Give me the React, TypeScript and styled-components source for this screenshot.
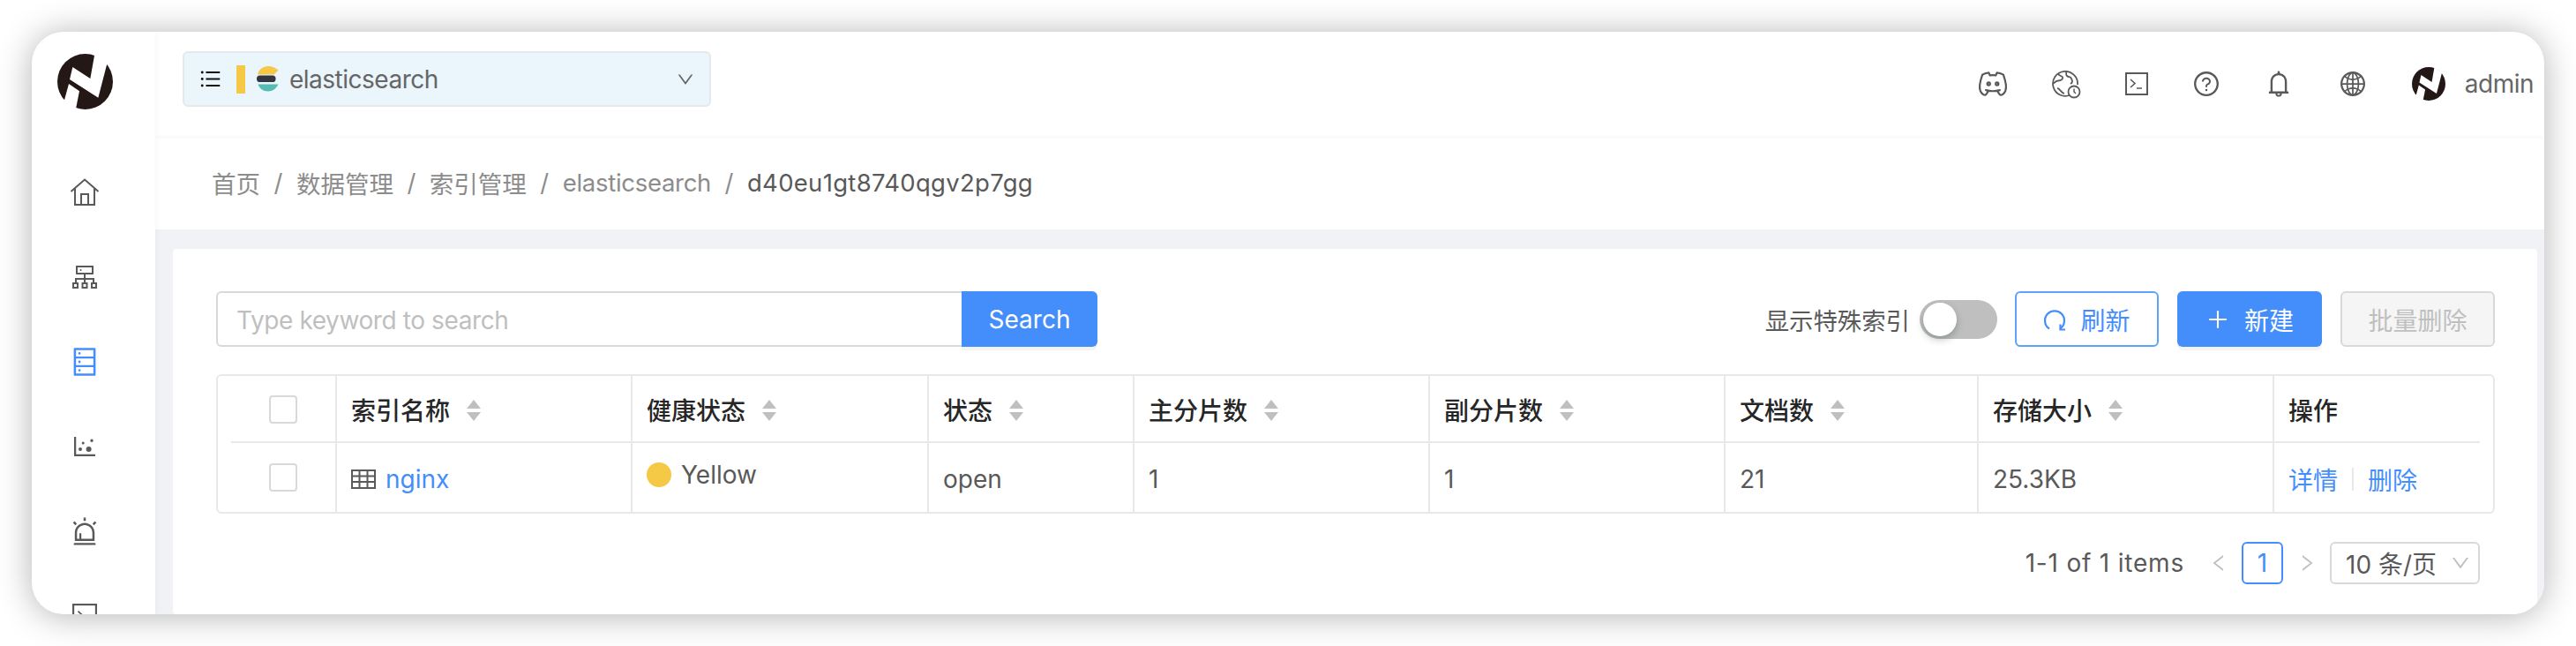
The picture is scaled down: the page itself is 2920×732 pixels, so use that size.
import styled, { createGlobalStyle } from "styled-components";
import {
  AiOutlineAlert,
  AiOutlineBell,
  AiOutlineDatabase,
  AiOutlineDotChart,
  AiOutlineDown,
  AiOutlineGlobal,
  AiOutlineLeft,
  AiOutlinePlus,
  AiOutlineQuestionCircle,
  AiOutlineRight,
  AiOutlineUnorderedList,
} from "react-icons/ai";
import { TbBrandDiscord } from "react-icons/tb";

const GlobalStyle = createGlobalStyle`
  html, body {
    margin: 0;
    background: #fff;
    overflow: hidden;
  }
  body {
    font-family: Inter, "Noto Sans CJK SC", sans-serif;
  }
  * {
    box-sizing: border-box;
  }
`;

const Logo = ({ size }: { size: number }) => (
  <svg width={size} height={size} viewBox="0 0 189 189">
    <circle cx="94.5" cy="94.5" r="94.5" fill="#231815" />
    <polygon points="127,0 170,30 139,149 42,87 52,45 112,84" fill="#fff" />
    <polygon points="39,102 75,127 62,192 22,164" fill="#fff" />
  </svg>
);

const ElasticLogo = () => (
  <svg width="26" height="29" viewBox="0 0 26 29">
    <path d="M1 9.5C2 4 7 0 13 0c4.5 0 8.5 2 11.500 4.500L19.500 9.500z" fill="#f5c945" />
    <rect x="0" y="10.500" width="21.500" height="7.500" rx="3.600" fill="#343741" />
    <path d="M1.500 20.500h23C22 25.500 18 28.500 13 28.500c-6 0-10-3.500-11.500-8z" fill="#54bcb2" />
  </svg>
);

const HomeIcon = () => (
  <svg width="34" height="32" viewBox="0 0 34 32" fill="none" stroke="#595959" strokeWidth="2">
    <path d="M1.500 15L17 1.500 32.500 15" />
    <path d="M6 11.500V30h22V11.500" />
    <path d="M13 30V18h8v12" />
  </svg>
);

const ClusterIcon = () => (
  <svg width="28" height="26" viewBox="0 0 28 26" fill="none" stroke="#595959" strokeWidth="2">
    <rect x="5" y="1" width="18" height="8" />
    <path d="M14 9v6M4 20v-5h20v5M14 15v5" />
    <rect x="1" y="20" width="5" height="5" />
    <rect x="11.500" y="20" width="5" height="5" />
    <rect x="22" y="20" width="5" height="5" />
    <circle cx="9.500" cy="5" r="1" fill="#595959" stroke="none" />
  </svg>
);

const TerminalIcon = ({ size }: { size: number }) => (
  <svg width={size} height={size} viewBox="0 0 26 26" fill="none" stroke="#595959" strokeWidth="2">
    <rect x="1" y="1" width="24" height="24" />
    <path d="M6 8l5 4.500-5 4.500M13 18h6" strokeWidth="1.600" />
  </svg>
);

const GlobeClockIcon = () => (
  <svg width="34" height="34" viewBox="0 0 34 34" fill="none" stroke="#595959" strokeWidth="1.800">
    <path d="M22 29.500A14 14 0 1 1 30 18" />
    <path d="M8 5.500c1 3 4 2 5 4s-2 4-5 4-4 2-5 3M17 2c1 3-1 4 1 6s4 0 5 3 2 4-1 6M7 22c3 0 4 5 8 6" />
    <circle cx="26" cy="26" r="6.500" fill="#fff" />
    <path d="M26 22.500V26l2 2" strokeWidth="1.500" />
  </svg>
);

const RefreshIcon = () => (
  <svg width="26" height="28" viewBox="0 0 26 28" fill="none" stroke="#448efc" strokeWidth="2.200">
    <path d="M7 24.500A11 11 0 1 1 19 24.500" />
    <path d="M19.500 19.500v6h5.500" />
  </svg>
);

const TableIcon = () => (
  <svg width="28" height="22" viewBox="0 0 28 22" fill="none" stroke="#595959" strokeWidth="2">
    <rect x="1" y="1" width="26" height="20" />
    <path d="M1 7.500h26M1 14h26M9.500 1v20M18.500 1v20" />
  </svg>
);

const Sorter = () => (
  <SortBox>
    <svg width="16" height="24" viewBox="0 0 16 24" fill="#bfbfbf">
      <path d="M8 0l8 10H0zM8 24L0 14h16z" />
    </svg>
  </SortBox>
);

const navIcons = [
  <HomeIcon key="home" />,
  <ClusterIcon key="cluster" />,
  <AiOutlineDatabase size={36} key="db" color="#448efc" />,
  <AiOutlineDotChart size={32} key="chart" />,
  <AiOutlineAlert size={36} key="alert" />,
  <TerminalIcon size={28} key="term" />,
];

const columns = [
  { title: "索引名称", width: 335 },
  { title: "健康状态", width: 336 },
  { title: "状态", width: 233 },
  { title: "主分片数", width: 335 },
  { title: "副分片数", width: 335 },
  { title: "文档数", width: 287 },
  { title: "存储大小", width: 335 },
];

export default function App() {
  return (
    <>
      <GlobalStyle />
      <Page>
        <Frame>
          <Sidebar>
            <LogoSlot>
              <Logo size={63} />
            </LogoSlot>
            {navIcons.map((icon, i) => (
              <NavItem key={i}>{icon}</NavItem>
            ))}
          </Sidebar>
          <Main>
            <Header>
              <ClusterSelect>
                <AiOutlineUnorderedList size={27} color="#111" />
                <YellowBar />
                <ElasticLogo />
                <ClusterName>elasticsearch</ClusterName>
                <SelectArrow>
                  <AiOutlineDown size={22} />
                </SelectArrow>
              </ClusterSelect>
              <Tools>
                <Tool $w={84}>
                  <TbBrandDiscord size={38} strokeWidth={1.4} />
                </Tool>
                <Tool $w={82}>
                  <GlobeClockIcon />
                </Tool>
                <Tool $w={78}>
                  <TerminalIcon size={26} />
                </Tool>
                <Tool $w={80}>
                  <AiOutlineQuestionCircle size={32} />
                </Tool>
                <Tool $w={84}>
                  <AiOutlineBell size={34} />
                </Tool>
                <Tool $w={84}>
                  <AiOutlineGlobal size={32} />
                </Tool>
                <UserBox>
                  <Logo size={38} />
                  <span>admin</span>
                </UserBox>
              </Tools>
            </Header>
            <Breadcrumb>
              <Crumb>首页</Crumb>
              <Sep>/</Sep>
              <Crumb>数据管理</Crumb>
              <Sep>/</Sep>
              <Crumb>索引管理</Crumb>
              <Sep>/</Sep>
              <Crumb $spacing={-0.3}>elasticsearch</Crumb>
              <Sep>/</Sep>
              <Crumb $current $spacing={0.3}>
                d40eu1gt8740qgv2p7gg
              </Crumb>
            </Breadcrumb>
            <Content>
              <Card>
                <Toolbar>
                  <SearchGroup>
                    <SearchInput placeholder="Type keyword to search" readOnly />
                    <SearchButton>Search</SearchButton>
                  </SearchGroup>
                  <Actions>
                    <ToggleLabel>显示特殊索引</ToggleLabel>
                    <Toggle>
                      <Knob />
                    </Toggle>
                    <OutlineButton>
                      <RefreshIcon />
                      刷新
                    </OutlineButton>
                    <PrimaryButton>
                      <AiOutlinePlus size={28} />
                      新建
                    </PrimaryButton>
                    <DisabledButton>批量删除</DisabledButton>
                  </Actions>
                </Toolbar>
                <Table>
                  <Row $head>
                    <CheckCell $w={136}>
                      <Checkbox />
                    </CheckCell>
                    {columns.map((c) => (
                      <HeadCell $w={c.width} key={c.title}>
                        {c.title}
                        <Sorter />
                      </HeadCell>
                    ))}
                    <HeadCell $w={250} $last>
                      操作
                    </HeadCell>
                  </Row>
                  <Row>
                    <CheckCell $w={136}>
                      <Checkbox />
                    </CheckCell>
                    <Cell $w={335}>
                      <TableIcon />
                      <IndexLink>nginx</IndexLink>
                    </Cell>
                    <Cell $w={336}>
                      <Health>
                        <Dot />
                        Yellow
                      </Health>
                    </Cell>
                    <Cell $w={233}>open</Cell>
                    <Cell $w={335}>1</Cell>
                    <Cell $w={335}>1</Cell>
                    <Cell $w={287}>21</Cell>
                    <Cell $w={335}>25.3KB</Cell>
                    <Cell $w={250} $last>
                      <ActionLink>详情</ActionLink>
                      <ActionDivider />
                      <ActionLink>删除</ActionLink>
                    </Cell>
                  </Row>
                </Table>
                <Pagination>
                  <Total>1-1 of 1 items</Total>
                  <PageArrow>
                    <AiOutlineLeft size={24} />
                  </PageArrow>
                  <PageNumber>1</PageNumber>
                  <PageArrow>
                    <AiOutlineRight size={24} />
                  </PageArrow>
                  <PageSize>
                    10 条/页
                    <AiOutlineDown size={24} color="#bfbfbf" />
                  </PageSize>
                </Pagination>
              </Card>
            </Content>
          </Main>
        </Frame>
      </Page>
    </>
  );
}

const Page = styled.div`
  width: 2920px;
  height: 732px;
  padding: 36px;
`;

const Frame = styled.div`
  width: 2848px;
  height: 660px;
  display: flex;
  background: #fff;
  border-radius: 36px;
  overflow: hidden;
  box-shadow: 0 2px 38px rgba(0, 0, 0, 0.3);
`;

const Sidebar = styled.div`
  width: 140px;
  flex: none;
  display: flex;
  flex-direction: column;
  align-items: center;
  padding-right: 20px;
  color: #595959;
  box-shadow: 2px 0 6px rgba(0, 0, 0, 0.03);
  z-index: 1;
`;

const LogoSlot = styled.div`
  height: 134px;
  padding-top: 25px;
  flex: none;
`;

const NavItem = styled.div`
  height: 96px;
  flex: none;
  display: flex;
  align-items: center;
  justify-content: center;
`;

const Main = styled.div`
  flex: 1;
  min-width: 0;
  display: flex;
  flex-direction: column;
`;

const Header = styled.div`
  height: 118px;
  flex: none;
  display: flex;
  justify-content: space-between;
  padding: 22px 12px 0 31px;
  box-shadow: 0 2px 4px rgba(0, 0, 0, 0.03);
  z-index: 1;
`;

const ClusterSelect = styled.div`
  width: 599px;
  height: 63px;
  display: flex;
  align-items: center;
  padding: 0 16px 0 16px;
  background: #eaf5fc;
  border: 2px solid #e6e8ea;
  border-radius: 6px;
  color: #595959;
`;

const YellowBar = styled.div`
  width: 10px;
  height: 32px;
  margin: 0 13px 0 16px;
  background: #f5c945;
`;

const ClusterName = styled.span`
  margin-left: 11px;
  font-size: 28px;
  letter-spacing: -0.5px;
  color: #666;
`;

const SelectArrow = styled.span`
  margin-left: auto;
  display: flex;
  color: #666;
`;

const Tools = styled.div`
  height: 74px;
  display: flex;
  align-items: center;
  color: #595959;
`;

const Tool = styled.div<{ $w: number }>`
  width: ${(p) => p.$w}px;
  display: flex;
  justify-content: center;
  align-items: center;
`;

const UserBox = styled.div`
  margin-left: 25px;
  display: flex;
  align-items: center;
  gap: 22px;
  font-size: 28px;
  letter-spacing: -0.5px;
  color: #666;
`;

const Breadcrumb = styled.div`
  height: 106px;
  flex: none;
  display: flex;
  align-items: center;
  padding: 0 0 0 64px;
  font-size: 27.5px;
  box-shadow: 0 2px 2px rgba(0, 0, 0, 0.03);
`;

const Crumb = styled.span<{ $current?: boolean; $spacing?: number }>`
  color: ${(p) => (p.$current ? "#595959" : "#8c8c8c")};
  letter-spacing: ${(p) => p.$spacing ?? 0}px;
`;

const Sep = styled.span`
  margin: 0 15.5px;
  color: #8c8c8c;
`;

const Content = styled.div`
  flex: 1;
  background: #f0f2f5;
  padding: 22px 8px 0 20px;
`;

const Card = styled.div`
  height: 100%;
  background: #fff;
  border-radius: 4px;
  padding: 48px 48px 0 49px;
`;

const Toolbar = styled.div`
  display: flex;
  justify-content: space-between;
  align-items: center;
  height: 63px;
`;

const SearchGroup = styled.div`
  display: flex;
`;

const SearchInput = styled.input`
  width: 845px;
  height: 63px;
  padding: 2px 22px 0 21px;
  font: 28px Inter, sans-serif;
  letter-spacing: -0.4px;
  border: 2px solid #d9d9d9;
  border-right: 0;
  border-radius: 6px 0 0 6px;
  outline: none;
  &::placeholder {
    color: #bfbfbf;
  }
`;

const SearchButton = styled.button`
  width: 154px;
  height: 63px;
  font: 28px Inter, sans-serif;
  color: #fff;
  background: #448efc;
  border: 0;
  border-radius: 0 6px 6px 0;
  box-shadow: 0 4px 0 rgba(0, 0, 0, 0.045);
`;

const Actions = styled.div`
  display: flex;
  align-items: center;
`;

const ToggleLabel = styled.span`
  font-size: 27.4px;
  color: #595959;
  margin-right: 11px;
`;

const Toggle = styled.div`
  width: 88px;
  height: 44px;
  margin-right: 20px;
  display: flex;
  align-items: center;
  padding-left: 4px;
  background: #bfbfbf;
  border-radius: 22px;
`;

const Knob = styled.div`
  width: 38px;
  height: 38px;
  border-radius: 50%;
  background: #fff;
  box-shadow: 0 4px 8px rgba(0, 35, 11, 0.25);
`;

const BaseButton = styled.button`
  height: 63px;
  display: flex;
  align-items: center;
  justify-content: center;
  gap: 16px;
  font: 28px Inter, "Noto Sans CJK SC", sans-serif;
  border-radius: 6px;
`;

const OutlineButton = styled(BaseButton)`
  width: 163px;
  color: #448efc;
  background: #fff;
  border: 2px solid #5aa5fa;
`;

const PrimaryButton = styled(BaseButton)`
  width: 164px;
  margin-left: 21px;
  color: #fff;
  background: #448efc;
  border: 0;
  box-shadow: 0 4px 0 rgba(0, 0, 0, 0.045);
`;

const DisabledButton = styled(BaseButton)`
  width: 175px;
  margin-left: 21px;
  color: #bfbfbf;
  background: #f5f5f5;
  border: 2px solid #d9d9d9;
`;

const Table = styled.div`
  position: relative;
  margin-top: 31px;
  width: 2583px;
  border: 2px solid #e8e8e8;
  border-radius: 6px;
`;

const Row = styled.div<{ $head?: boolean }>`
  position: relative;
  display: flex;
  height: ${(p) => (p.$head ? 76 : 78)}px;
  ${(p) =>
    p.$head &&
    `&::after {
      content: "";
      position: absolute;
      left: 15px;
      right: 15px;
      bottom: 0;
      height: 2px;
      background: #e8e8e8;
    }`}
`;

const CheckCell = styled.div<{ $w: number }>`
  width: ${(p) => p.$w - 1}px;
  flex: none;
  display: flex;
  align-items: center;
  padding-left: 58px;
  border-right: 2px solid #e8e8e8;
`;

const Checkbox = styled.div`
  width: 32px;
  height: 32px;
  background: #fff;
  border: 2px solid #d9d9d9;
  border-radius: 4px;
`;

const HeadCell = styled.div<{ $w: number; $last?: boolean }>`
  width: ${(p) => p.$w}px;
  flex: none;
  display: flex;
  align-items: center;
  padding-left: 16px;
  font-size: 28px;
  font-weight: 500;
  color: #262626;
  border-right: ${(p) => (p.$last ? "0" : "2px solid #e8e8e8")};
`;

const SortBox = styled.span`
  margin-left: 19px;
  display: flex;
  margin-top: 2px;
`;

const Cell = styled.div<{ $w: number; $last?: boolean }>`
  width: ${(p) => p.$w}px;
  flex: none;
  display: flex;
  align-items: center;
  padding-left: 16px;
  padding-top: 3px;
  font-size: 28px;
  color: #595959;
  border-right: ${(p) => (p.$last ? "0" : "2px solid #e8e8e8")};
`;

const IndexLink = styled.span`
  margin-left: 11px;
  color: #448efc;
`;

const Health = styled.div`
  display: flex;
  align-items: center;
  gap: 11px;
  margin-top: -9px;
`;

const Dot = styled.span`
  width: 28px;
  height: 28px;
  border-radius: 50%;
  background: #f5c945;
`;

const ActionLink = styled.span`
  color: #448efc;
`;

const ActionDivider = styled.span`
  width: 2px;
  height: 26px;
  margin: 0 16px;
  background: #e8e8e8;
`;

const Pagination = styled.div`
  width: 2566px;
  margin-top: 32px;
  display: flex;
  justify-content: flex-end;
  align-items: center;
  font-size: 28px;
  color: #595959;
`;

const Total = styled.span`
  margin-right: 12px;
  letter-spacing: 0.8px;
`;

const PageArrow = styled.span`
  display: flex;
  color: #bfbfbf;
  margin: 0 14.5px;
`;

const PageNumber = styled.div`
  width: 47px;
  height: 48px;
  display: flex;
  align-items: center;
  justify-content: center;
  color: #448efc;
  border: 2px solid #448efc;
  border-radius: 6px;
`;

const PageSize = styled.div`
  width: 170px;
  height: 48px;
  margin-left: 0;
  padding: 0 8px 0 16px;
  display: flex;
  align-items: center;
  justify-content: space-between;
  border: 2px solid #d9d9d9;
  border-radius: 6px;
`;
